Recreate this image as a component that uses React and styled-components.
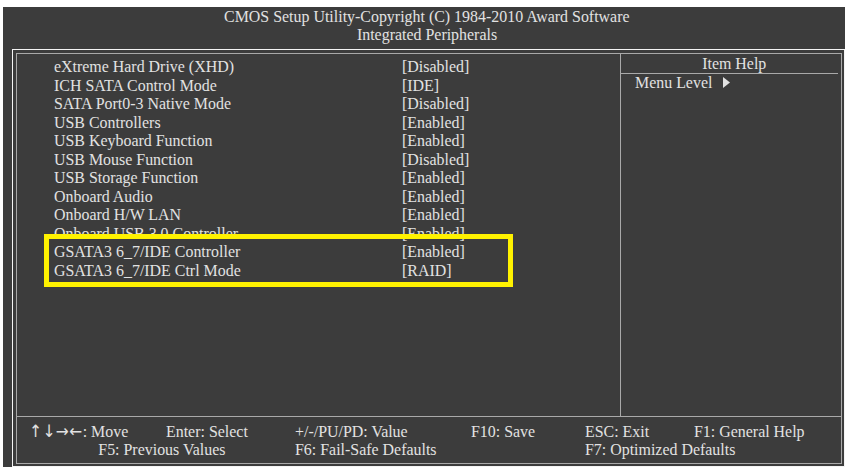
import React from "react";
import styled, { createGlobalStyle } from "styled-components";

const items = [
    ["eXtreme Hard Drive (XHD)", "[Disabled]"],
    ["ICH SATA Control Mode", "[IDE]"],
    ["SATA Port0-3 Native Mode", "[Disabled]"],
    ["USB Controllers", "[Enabled]"],
    ["USB Keyboard Function", "[Enabled]"],
    ["USB Mouse Function", "[Disabled]"],
    ["USB Storage Function", "[Enabled]"],
    ["Onboard Audio", "[Enabled]"],
    ["Onboard H/W LAN", "[Enabled]"],
    ["Onboard USB 3.0 Controller", "[Enabled]"],
    ["GSATA3 6_7/IDE Controller", "[Enabled]"],
    ["GSATA3 6_7/IDE Ctrl Mode", "[RAID]"],
];

const App = () => {
    return (
        <>
            <GlobalStyle />
            <Screen>
                <Header>
                    <div><Text origin="center">CMOS Setup Utility-Copyright (C) 1984-2010 Award Software</Text></div>
                    <div><Text origin="center">Integrated Peripherals</Text></div>
                </Header>
                <OuterFrame>
                    <InnerFrame>
                        <MainPanel>
                            {items.map(([label, value]) => (
                                <Row key={label}>
                                    <Text>{label}</Text>
                                    <Text>{value}</Text>
                                </Row>
                            ))}
                            <Highlight />
                        </MainPanel>
                        <HelpPanel>
                            <HelpTitle><Text origin="center">Item Help</Text></HelpTitle>
                            <MenuLevel>
                                <Text>Menu Level</Text>
                                <svg width="7" height="11" viewBox="0 0 7 11">
                                    <path d="M0 0 L7 5.5 L0 11 Z" fill="#e2e2e2" />
                                </svg>
                            </MenuLevel>
                        </HelpPanel>
                        <Footer>
                            <Key col="1"><Text><Arrows>↑↓→←</Arrows>: Move</Text></Key>
                            <Key col="2"><Text>Enter: Select</Text></Key>
                            <Key col="3"><Text>+/-/PU/PD: Value</Text></Key>
                            <Key col="4"><Text>F10: Save</Text></Key>
                            <Key col="5"><Text>ESC: Exit</Text></Key>
                            <Key col="6"><Text>F1: General Help</Text></Key>
                            <Key col="1 / span 2" center><Text origin="center">F5: Previous Values</Text></Key>
                            <Key col="3 / span 2"><Text>F6: Fail-Safe Defaults</Text></Key>
                            <Key col="5 / span 2"><Text>F7: Optimized Defaults</Text></Key>
                        </Footer>
                    </InnerFrame>
                </OuterFrame>
            </Screen>
        </>
    );
};

export default App;

const GlobalStyle = createGlobalStyle`
    html, body {
        margin: 0;
        background: #ffffff;
    }
    body {
        width: 845px;
        height: 467px;
        overflow: hidden;
    }
`;

const Screen = styled.div`
    margin: 7px 0 0 3px;
    width: 842px;
    height: 460px;
    background: #3c3c3c;
    color: #e2e2e2;
    font-family: "Liberation Serif", "Times New Roman", serif;
    font-size: 17.5px;
    display: flex;
    flex-direction: column;
`;

// the BIOS font is a touch narrower than Times, so squeeze each run of text
const Text = styled.span`
    display: inline-block;
    white-space: nowrap;
    transform: scaleX(0.91);
    transform-origin: ${(p) => p.origin || "left"} center;
`;

const Arrows = styled.span`
    font-family: "DejaVu Sans", sans-serif;
    font-size: 17px;
    letter-spacing: 0.5px;
`;

const Header = styled.div`
    height: 42px;
    padding: 0 3px 0 9px;
    box-sizing: border-box;
    text-align: center;
    line-height: 18px;
`;

const OuterFrame = styled.div`
    margin-left: 9px;
    height: 418px;
    box-sizing: border-box;
    border: 1px solid #f4f4f4;
    padding: 3px 2px 2px 3px;
    display: flex;
`;

const InnerFrame = styled.div`
    flex: 1;
    border: 1px solid #a9a9a9;
    display: grid;
    grid-template-columns: 604px 1fr;
    grid-template-rows: 363px 1fr;
`;

const MainPanel = styled.div`
    position: relative;
    padding: 3px 0 0 37px;
    border-right: 1px solid #a9a9a9;
    border-bottom: 1px solid #a9a9a9;
`;

const Row = styled.div`
    display: grid;
    grid-template-columns: 348px 1fr;
    height: 18.5px;
    line-height: 18.5px;
`;

const Highlight = styled.div`
    position: absolute;
    left: 27px;
    top: 180px;
    width: 469px;
    height: 53px;
    box-sizing: border-box;
    border: 5px solid #fff200;
`;

const HelpPanel = styled.div`
    border-bottom: 1px solid #a9a9a9;
    padding-right: 3px;
`;

const HelpTitle = styled.div`
    height: 19px;
    line-height: 19px;
    text-align: center;
    padding-left: 10px;
    border-bottom: 1px solid #a9a9a9;
`;

const MenuLevel = styled.div`
    display: flex;
    align-items: center;
    gap: 3px;
    padding-left: 14px;
    height: 16px;
    line-height: 16px;

    svg {
        margin-top: 1px;
    }
`;

const Footer = styled.div`
    grid-column: 1 / span 2;
    display: grid;
    grid-template-columns: 137px 129px 176px 114px 109px 1fr;
    grid-auto-rows: 18px;
    padding: 5px 0 0 12px;
    line-height: 18px;
`;

const Key = styled.span`
    grid-column: ${(p) => p.col};
    text-align: ${(p) => (p.center ? "center" : "left")};
`;
